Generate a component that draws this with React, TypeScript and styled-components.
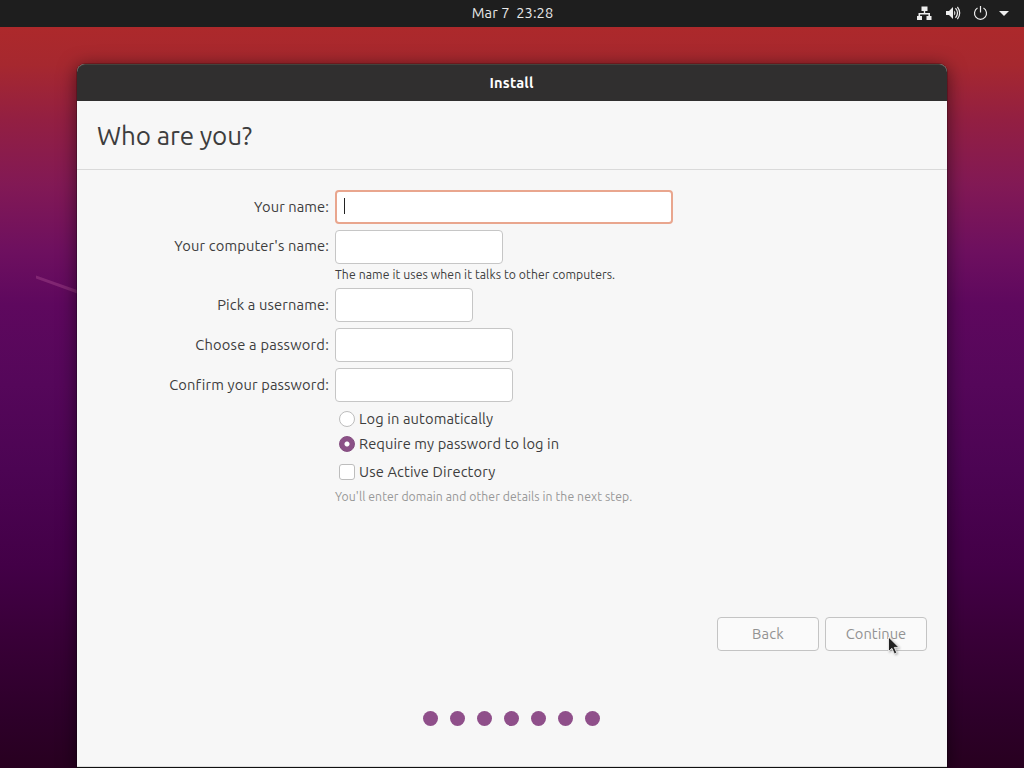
import { useState } from 'react';
import styled, { createGlobalStyle, css } from 'styled-components';

const GlobalStyle = createGlobalStyle`
  * {
    box-sizing: border-box;
  }

  body {
    margin: 0;
    overflow: hidden;
    color: #3d3d3d;
    font-family: Ubuntu, 'Noto Sans', sans-serif;
    font-size: 14.667px;
  }
`;

const STEPS = [1, 2, 3, 4, 5, 6, 7];

function App() {
  const [login, setLogin] = useState('password');
  const [directory, setDirectory] = useState(false);

  return (
    <StyledDesktop>
      <GlobalStyle />
      <StyledStreak viewBox="0 0 80 30">
        <path d="M36 2.5 80 18v3.5L36 5.5z" fill="#a3488c" fillOpacity="0.45" />
      </StyledStreak>
      <StyledTopBar>
        <StyledText $track={0.05}>Mar 7&nbsp; 23:28</StyledText>
        <StatusIcons />
      </StyledTopBar>
      <StyledWindow>
        <StyledTitleBar>
          <StyledText $track={0.2}>Install</StyledText>
        </StyledTitleBar>
        <StyledHeading>
          <StyledText $track={-0.1}>Who are you?</StyledText>
        </StyledHeading>
        <StyledForm>
          <StyledRow>
            <StyledLabel htmlFor="name" $track={0.1}>Your name:</StyledLabel>
            <StyledFocusedField>
              <StyledInput id="name" $width={338} $focused />
              <StyledCaret />
            </StyledFocusedField>
          </StyledRow>
          <StyledRow>
            <StyledLabel htmlFor="host" $track={0.15} $lift={4}>Your computer's name:</StyledLabel>
            <StyledInput id="host" $width={168} />
          </StyledRow>
          <StyledHint $track={0.08}>The name it uses when it talks to other computers.</StyledHint>
          <StyledRow>
            <StyledLabel htmlFor="user" $track={0.15}>Pick a username:</StyledLabel>
            <StyledInput id="user" $width={138} />
          </StyledRow>
          <StyledRow>
            <StyledLabel htmlFor="password" $track={0.23}>Choose a password:</StyledLabel>
            <StyledInput id="password" type="password" $width={178} />
          </StyledRow>
          <StyledRow>
            <StyledLabel htmlFor="confirm" $track={0.15}>Confirm your password:</StyledLabel>
            <StyledInput id="confirm" type="password" $width={178} />
          </StyledRow>
          <StyledOptions>
            <StyledOption onClick={() => setLogin('auto')}>
              <StyledRadio $checked={login === 'auto'} />
              <StyledText $track={0.12}>Log in automatically</StyledText>
            </StyledOption>
            <StyledOption onClick={() => setLogin('password')}>
              <StyledRadio $checked={login === 'password'} />
              <StyledText $track={0.08}>Require my password to log in</StyledText>
            </StyledOption>
            <StyledOption $gap={3} onClick={() => setDirectory(!directory)}>
              <StyledCheckbox $checked={directory} />
              <StyledText $track={0.14}>Use Active Directory</StyledText>
            </StyledOption>
          </StyledOptions>
          <StyledHint $muted $track={0.07}>You'll enter domain and other details in the next step.</StyledHint>
        </StyledForm>
        <StyledFooter>
          <StyledButton disabled $track={0.2}>Back</StyledButton>
          <StyledButton disabled $track={0.05}>Continue</StyledButton>
        </StyledFooter>
        <StyledSteps>
          {STEPS.map((step) => (
            <StyledDot key={step} />
          ))}
        </StyledSteps>
      </StyledWindow>
      <StyledPointer viewBox="0 0 14 20">
        <path d="M1.5 1v14.5l3.4-3.2 2.5 5.6 2.4-1.1-2.5-5.4h4.6z" fill="#222" stroke="#fff" strokeWidth="0.8" />
      </StyledPointer>
    </StyledDesktop>
  );
}

export default App;

function StatusIcons() {
  return (
    <StyledStatus viewBox="0 0 96 18">
      <g fill="#eee">
        {/* wired network */}
        <path d="M5.5 2.5h6v4.5H9.2v2H14v3h1.5v4h-5v-4h1.9v-1.6H4.1V12H6v4H1v-4h1.5V9h5.3V7H5.5z" />
        {/* volume */}
        <path d="M30 7h3l4-4v12l-4-4h-3z" />
        <path d="M38.2 6.4q2.4 2.6 0 5.2z" />
        {/* menu arrow */}
        <path d="M83 7h10l-5 5z" />
      </g>
      <g fill="none" stroke="#eee" strokeWidth="1.2">
        <path d="M39.5 4.2q4 4.8 0 9.6M41.4 2.8q4.6 6.2 0 12.4" />
        <path d="M61.5 4.1a6 6 0 1 0 6 0M64.5 2v6.5" />
      </g>
    </StyledStatus>
  );
}

interface TrackProps {
  $track: number;
}

const tracking = css<TrackProps>`
  letter-spacing: ${({ $track }) => $track}px;
`;

const StyledDesktop = styled.div`
  position: relative;
  width: 1024px;
  height: 768px;

  display: flex;
  flex-direction: column;
  align-items: center;

  overflow: hidden;
  background: linear-gradient(
    180deg,
    #ad292b 27px,
    #a6282f 65px,
    #931f42 120px,
    #821955 185px,
    #6e105f 250px,
    #5e085e 305px,
    #55075a 385px,
    #4c0453 470px,
    #430047 565px,
    #390038 635px,
    #2d0029 720px,
    #280020 768px
  );
`;

const StyledStreak = styled.svg`
  position: absolute;
  top: 273px;
  left: 0;
  width: 80px;
  height: 30px;
`;

const StyledTopBar = styled.header`
  width: 100%;
  height: 27px;

  display: grid;
  grid-template-columns: 1fr auto 1fr;
  align-items: center;
  padding-bottom: 1px;

  background: #1e1e1e;
  color: #e8e8e8;

  > :first-child {
    grid-column: 2;
    padding: 0 0 2px 1px;
  }
`;

const StyledStatus = styled.svg`
  width: 96px;
  height: 18px;
  margin-right: 12px;
  justify-self: end;
`;

const StyledText = styled.span<TrackProps>`
  ${tracking};

  white-space: nowrap;
`;

const StyledWindow = styled.main`
  position: relative;
  width: 870px;
  height: 703px;
  margin-top: 37px;
  flex: none;

  display: flex;
  flex-direction: column;

  border-radius: 8px 8px 0 0;
  border-bottom: 1px solid #ddd;
  background: #f7f7f7;
  box-shadow:
    0 1px 0 0 #111,
    0 0 0 1px rgba(0, 0, 0, 0.2),
    0 3px 18px 1px rgba(0, 0, 0, 0.5);
`;

const StyledTitleBar = styled.div`
  height: 37px;
  padding: 0 1px 2px 0;

  display: flex;
  align-items: center;
  justify-content: center;

  border-top: 1px solid #44423d;
  border-radius: 8px 8px 0 0;
  background: #302f2f;
  color: #fff;
  font-weight: 700;
`;

const StyledHeading = styled.h1`
  height: 69px;
  margin: 0;
  padding: 0 20px;

  display: flex;
  align-items: center;

  border-bottom: 1px solid #dadada;
  font-size: 26px;
  font-weight: 400;
`;

const StyledForm = styled.form`
  height: 447px;
  padding-top: 20px;

  display: flex;
  flex-direction: column;
`;

const StyledRow = styled.div`
  height: 34px;
  margin-bottom: 6px;

  display: grid;
  grid-template-columns: 252px auto;
  column-gap: 6px;
  align-items: center;
  justify-content: start;
`;

const StyledLabel = styled.label<TrackProps & { $lift?: number }>`
  ${tracking};

  padding-bottom: ${({ $lift = 2 }) => $lift}px;
  text-align: right;
  white-space: nowrap;
`;

const StyledFocusedField = styled.div`
  position: relative;
  display: flex;
`;

const StyledCaret = styled.span`
  position: absolute;
  top: 8px;
  left: 9px;
  width: 1px;
  height: 16px;
  background: #222;
`;

const StyledInput = styled.input<{ $width: number; $focused?: boolean }>`
  width: ${({ $width }) => $width}px;
  height: 34px;
  padding: 0 8px;

  border: ${({ $focused }) => ($focused ? '2px solid #e9a68e' : '1px solid #c6c6c6')};
  border-radius: 4px;
  outline: none;
  background: #fff;
  font: inherit;
`;

const StyledHint = styled.p<TrackProps & { $muted?: boolean }>`
  ${tracking};

  height: 18px;
  margin: ${({ $muted }) => ($muted ? '4px' : '-4px')} 0 4px 258px;

  color: ${({ $muted }) => ($muted ? '#979797' : '#3d3d3d')};
  font-size: 12.22px;
  line-height: 18px;
  white-space: nowrap;
`;

const StyledOptions = styled.div`
  margin: -2px 0 0 262px;

  display: flex;
  flex-direction: column;
`;

const StyledOption = styled.div<{ $gap?: number }>`
  height: 25px;
  margin-top: ${({ $gap = 0 }) => $gap}px;

  display: flex;
  align-items: center;
  gap: 4px;
`;

const StyledRadio = styled.span<{ $checked: boolean }>`
  width: 16px;
  height: 16px;

  border: 1px solid ${({ $checked }) => ($checked ? '#844d80' : '#bdbdbd')};
  border-radius: 50%;
  background: ${({ $checked }) => ($checked ? 'radial-gradient(circle, #fff 2px, #8b5187 3px)' : '#fff')};
`;

const StyledCheckbox = styled.span<{ $checked: boolean }>`
  width: 16px;
  height: 16px;

  border: 1px solid #bdbdbd;
  border-radius: 3px;
  background: ${({ $checked }) => ($checked ? '#8b5187' : '#fff')};
`;

const StyledFooter = styled.div`
  padding: 0 20px;

  display: flex;
  justify-content: flex-end;
  gap: 6px;
`;

const StyledButton = styled.button<TrackProps>`
  ${tracking};

  width: 102px;
  height: 34px;
  padding: 0 0 2px;

  border: 1px solid #c4c4c4;
  border-radius: 4px;
  background: #fafafa;
  color: #929292;
  font-family: inherit;
  font-size: 14.667px;
`;

const StyledSteps = styled.div`
  margin-top: 60px;
  padding-right: 1px;

  display: flex;
  justify-content: center;
  gap: 12px;
`;

const StyledDot = styled.span`
  width: 15px;
  height: 15px;

  border-radius: 50%;
  background: #8f4f8a;
`;

const StyledPointer = styled.svg`
  position: absolute;
  top: 636px;
  left: 887px;
  width: 14px;
  height: 20px;
  filter: drop-shadow(1px 1px 1px rgba(0, 0, 0, 0.3));
`;
